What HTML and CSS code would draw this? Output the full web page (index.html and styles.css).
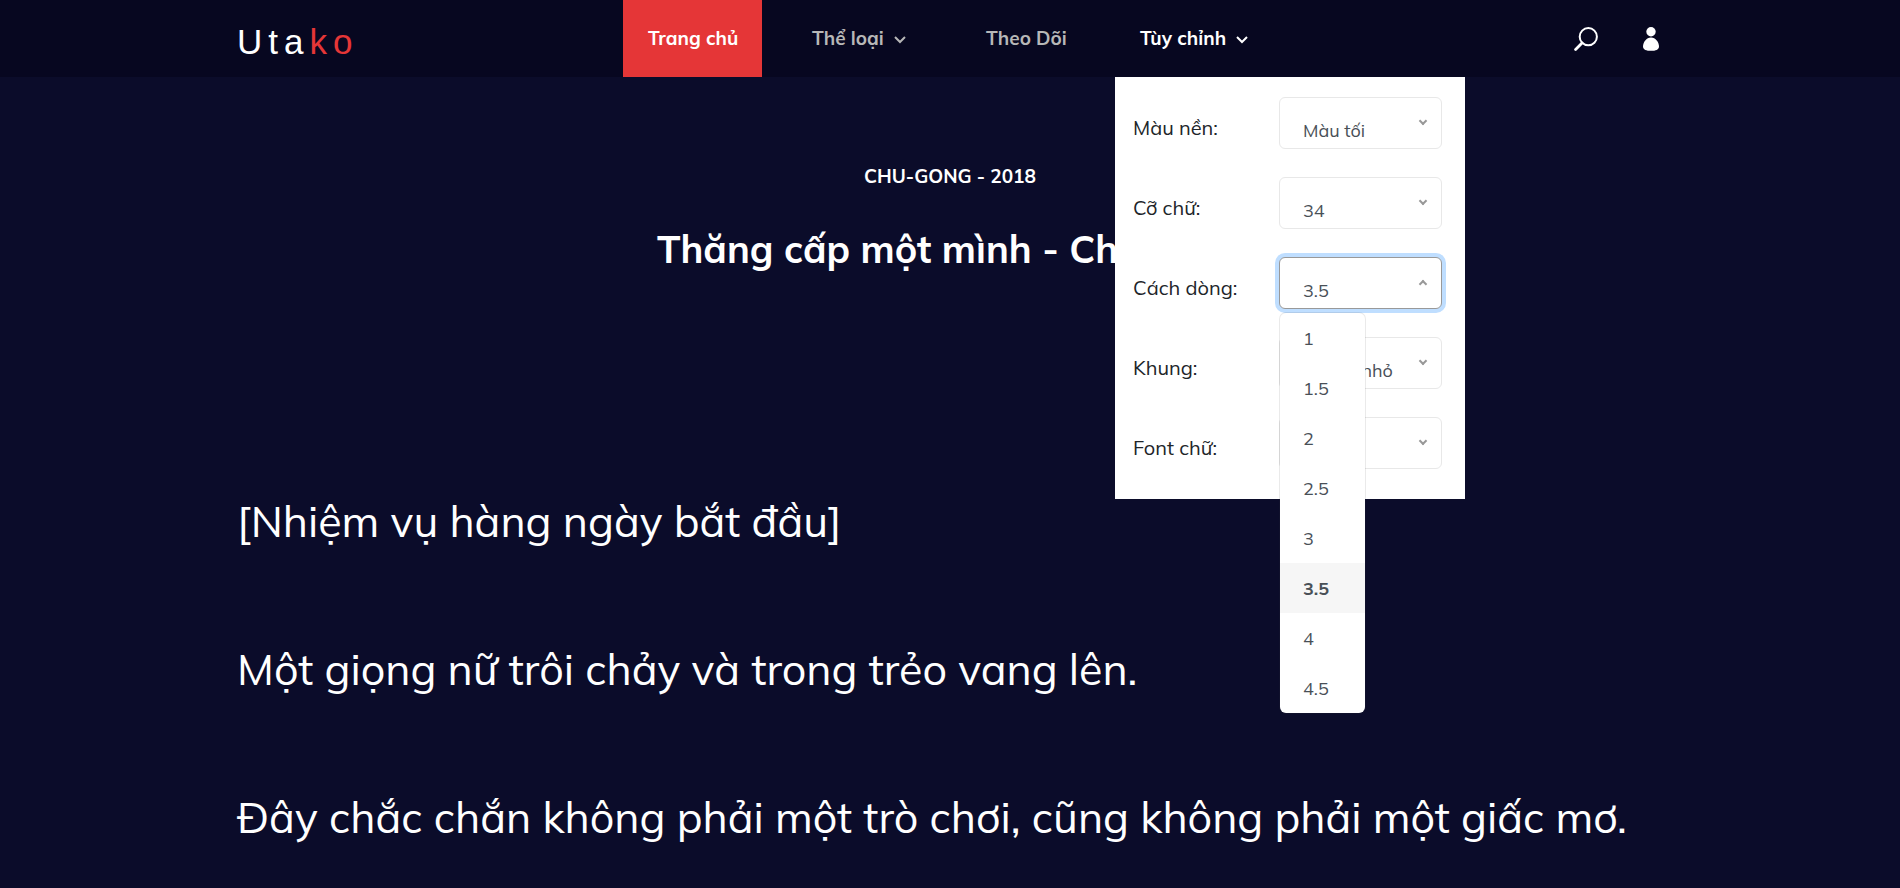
FILE: index.html
```html
<!DOCTYPE html>
<html lang="vi">
<head>
<meta charset="utf-8">
<meta name="viewport" content="width=device-width, initial-scale=1">
<title>Thăng cấp một mình - Utako</title>
<link rel="stylesheet" href="styles.css">
</head>
<body>
<header class="header">
  <div class="container header-row">
    <a class="logo" href="#">Uta<span class="logo-accent">ko</span></a>
    <nav class="nav">
      <a class="nav-link is-active" href="#">Trang chủ</a>
      <a class="nav-link" href="#">Thể loại
        <svg class="nav-arrow" viewBox="0 0 12 12" aria-hidden="true"><path d="M1 4l5 5 5-5"/></svg></a>
      <a class="nav-link" href="#">Theo Dõi</a>
      <div class="nav-item">
        <a class="nav-link is-open" href="#">Tùy chỉnh
          <svg class="nav-arrow" viewBox="0 0 12 12" aria-hidden="true"><path d="M1 4l5 5 5-5"/></svg></a>
        <form class="panel">
          <div class="field">
            <label class="field-label" for="theme">Màu nền:</label>
            <div class="picker"><select class="picker-box" id="theme"><option>Màu tối</option></select></div>
          </div>
          <div class="field">
            <label class="field-label" for="size">Cỡ chữ:</label>
            <div class="picker"><select class="picker-box" id="size"><option>34</option></select></div>
          </div>
          <div class="field">
            <label class="field-label" for="leading">Cách dòng:</label>
            <div class="picker is-expanded">
              <select class="picker-box" id="leading"><option>3.5</option></select>
              <ul class="options" role="listbox" aria-label="Cách dòng">
                <li class="option" role="option">1</li>
                <li class="option" role="option">1.5</li>
                <li class="option" role="option">2</li>
                <li class="option" role="option">2.5</li>
                <li class="option" role="option">3</li>
                <li class="option is-selected" role="option" aria-selected="true">3.5</li>
                <li class="option" role="option">4</li>
                <li class="option" role="option">4.5</li>
              </ul>
            </div>
          </div>
          <div class="field">
            <label class="field-label" for="frame">Khung:</label>
            <div class="picker"><select class="picker-box" id="frame"><option>Khung nhỏ</option></select></div>
          </div>
          <div class="field">
            <label class="field-label" for="face">Font chữ:</label>
            <div class="picker"><select class="picker-box" id="face"><option>Muli</option></select></div>
          </div>
        </form>
      </div>
    </nav>
    <div class="tools">
      <button class="tool" type="button" aria-label="Tìm kiếm">
        <svg class="tool-icon" viewBox="0 0 24 24" aria-hidden="true"><circle cx="14.3" cy="9.7" r="8.6" fill="none" stroke="currentColor" stroke-width="2"/><path d="M8 16L1.6 22.4" fill="none" stroke="currentColor" stroke-width="2.8" stroke-linecap="round"/></svg>
      </button>
      <button class="tool" type="button" aria-label="Tài khoản">
        <svg class="tool-icon is-narrow" viewBox="0 0 16 24" aria-hidden="true"><circle cx="8" cy="4.7" r="4.7" fill="currentColor"/><path d="M8 10.4C12.6 10.4 16 15.2 16 19.4C16 22.6 12.6 23.8 8 23.8S0 22.6 0 19.4C0 15.2 3.4 10.4 8 10.4Z" fill="currentColor"/></svg>
      </button>
    </div>
  </div>
</header>
<main class="container chapter">
  <p class="byline">CHU-GONG - 2018</p>
  <h1 class="title">Thăng cấp một mình - Chương 2</h1>
  <div class="story">
    <p class="line">[Nhiệm vụ hàng ngày bắt đầu]</p>
    <p class="line">Một giọng nữ trôi chảy và trong trẻo vang lên.</p>
    <p class="line">Đây chắc chắn không phải một trò chơi, cũng không phải một giấc mơ.</p>
  </div>
</main>
</body>
</html>
```
FILE: styles.css
```css
* { box-sizing: border-box; }

body {
  margin: 0;
  background: #0b0c2a;
  color: #fff;
  font-family: Mulish, "Noto Sans", sans-serif;
}

a { color: inherit; text-decoration: none; }

.container {
  max-width: 1426px;
  margin: 0 auto;
}

/* Header */
.header { background: #070720; }

.header-row {
  display: grid;
  grid-template-columns: 1fr auto 1fr;
  align-items: center;
}

.logo {
  padding-top: 6px;
  font-family: "Liberation Sans", sans-serif;
  font-size: 35px;
  line-height: 71px;
  letter-spacing: 6px;
}

.logo-accent { color: #e53637; }

.nav {
  display: grid;
  grid-template-columns: 139px 149px 129px 162px;
  column-gap: 25px;
}

.nav-item { position: relative; }

.nav-link {
  display: flex;
  align-items: center;
  gap: 10px;
  height: 77px;
  padding: 0 25px 2px;
  color: #b7b7b7;
  font-size: 19px;
  font-weight: 700;
  white-space: nowrap;
}

.nav-link.is-active { background: #e53637; color: #fff; }
.nav-link.is-open { color: #fff; }

.nav-arrow {
  width: 12px;
  height: 12px;
  margin-top: 2px;
  fill: none;
  stroke: currentColor;
  stroke-width: 2;
}

.tools {
  display: flex;
  justify-content: flex-end;
  gap: 45px;
  padding-right: 4px;
}

.tool {
  padding: 0;
  border: 0;
  background: none;
  color: #fff;
}

.tool-icon { display: block; width: 24px; height: 24px; }
.tool-icon.is-narrow { width: 16px; }

/* Reading settings */
.panel {
  position: absolute;
  top: 100%;
  left: 0;
  z-index: 2;
  display: grid;
  gap: 28px;
  width: 350px;
  padding: 20px 23px 30px 18px;
  background: #fff;
  color: #212529;
}

.field {
  display: flex;
  align-items: center;
  justify-content: space-between;
}

.field-label { padding-top: 8px; font-size: 20px; }

.picker { position: relative; width: 163px; }

.picker::after {
  content: "";
  position: absolute;
  top: 21px;
  right: 16px;
  box-sizing: border-box;
  width: 6px;
  height: 6px;
  border: solid #999;
  border-width: 0 2px 2px 0;
  transform: rotate(45deg);
}

.picker-box {
  display: block;
  appearance: none;
  width: 100%;
  height: 52px;
  padding: 14px 0 0 23px;
  border: 1px solid #e8e8e8;
  border-radius: 6px;
  outline: 0;
  background: #fff;
  color: #495057;
  font: 400 18px Mulish, "Noto Sans", sans-serif;
}

.is-expanded .picker-box {
  border-color: #999;
  box-shadow: 0 0 0 4px #bfdeff;
}

.picker.is-expanded::after { top: 24px; border-width: 2px 0 0 2px; }

.options {
  position: absolute;
  top: 56px;
  left: 1px;
  z-index: 3;
  width: 85px;
  margin: 0;
  padding: 0;
  overflow: hidden;
  list-style: none;
  border-radius: 6px;
  background: #fff;
  box-shadow: 0 0 0 1px rgba(68, 68, 68, 0.11);
  color: #495057;
}

.option {
  height: 50px;
  padding-left: 23px;
  font-size: 18px;
  line-height: 52px;
}

.option.is-selected { background: #f6f6f6; font-weight: 700; }

/* Chapter */
.chapter { padding-top: 84px; }

.byline {
  margin: 0;
  text-align: center;
  font-size: 19px;
  font-weight: 700;
  line-height: 30px;
}

.title {
  margin: 34px 0 0;
  text-align: center;
  font-size: 38px;
  font-weight: 700;
  line-height: 48px;
}

.story { padding-top: 174px; }

.line {
  margin: 0;
  font-size: 43px;
  line-height: 148px;
}
```
